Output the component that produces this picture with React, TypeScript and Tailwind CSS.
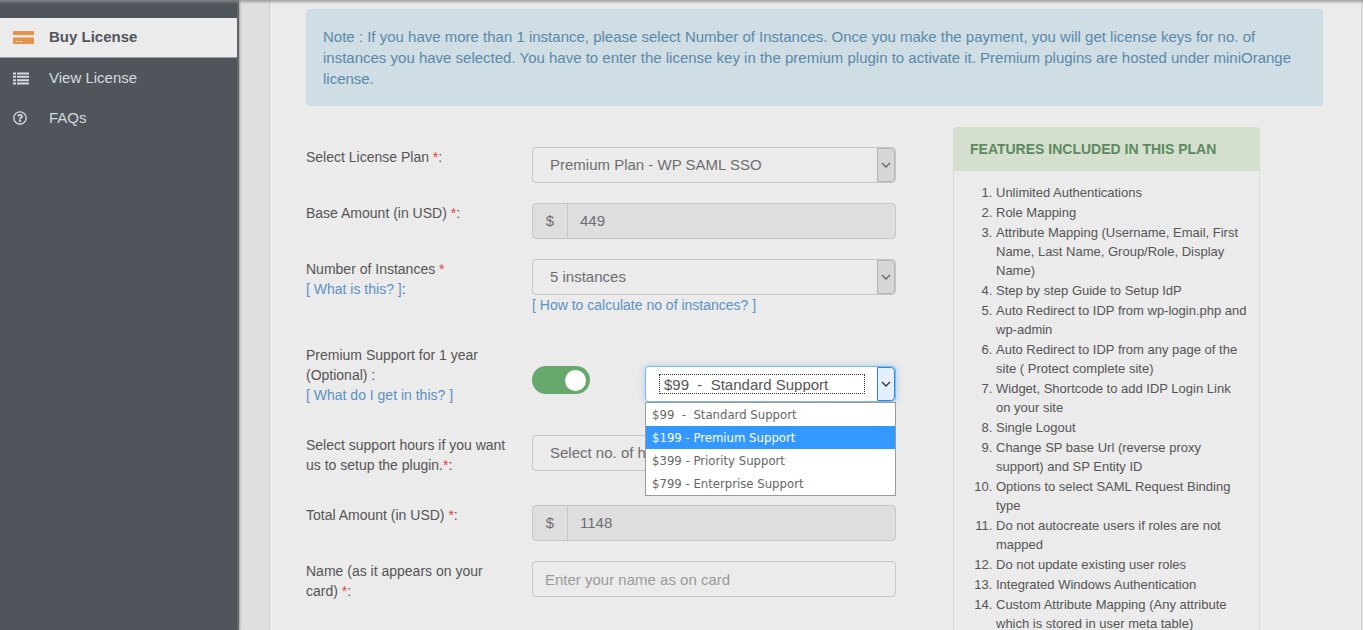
import React from "react";
import { FaRegQuestionCircle } from "react-icons/fa";

interface Option {
  label: string;
  highlighted?: boolean;
}

const FEATURES: string[] = [
  "Unlimited Authentications",
  "Role Mapping",
  "Attribute Mapping (Username, Email, First Name, Last Name, Group/Role, Display Name)",
  "Step by step Guide to Setup IdP",
  "Auto Redirect to IDP from wp-login.php and wp-admin",
  "Auto Redirect to IDP from any page of the site ( Protect complete site)",
  "Widget, Shortcode to add IDP Login Link on your site",
  "Single Logout",
  "Change SP base Url (reverse proxy support) and SP Entity ID",
  "Options to select SAML Request Binding type",
  "Do not autocreate users if roles are not mapped",
  "Do not update existing user roles",
  "Integrated Windows Authentication",
  "Custom Attribute Mapping (Any attribute which is stored in user meta table)",
];

const SUPPORT_OPTIONS: Option[] = [
  { label: "$99\u00a0 -\u00a0 Standard Support" },
  { label: "$199 - Premium Support", highlighted: true },
  { label: "$399 - Priority Support" },
  { label: "$799 - Enterprise Support" },
];

const CardIcon = () => (
  <svg width="21" height="13" viewBox="0 0 21 13" fill="#e69248" aria-hidden="true">
    <path d="M1 0h19a1 1 0 0 1 1 1v3H0V1a1 1 0 0 1 1-1z" />
    <path d="M0 6.5h21V12a1 1 0 0 1-1 1H1a1 1 0 0 1-1-1zM3 10v1h2v-1zM6 10v1h3v-1z" fillRule="evenodd" />
  </svg>
);

const ListIcon = () => (
  <svg width="16" height="13" viewBox="0 0 16 13" fill="currentColor" aria-hidden="true">
    <path d="M0 .5h3v2H0zM0 3.8h3v2H0zM0 7.2h3v2H0zM0 10.5h3v2H0z" />
    <path d="M4 .5h12v2H4zM4 3.8h12v2H4zM4 7.2h12v2H4zM4 10.5h12v2H4z" />
  </svg>
);

const Chevron = () => (
  <svg width="10" height="6" viewBox="0 0 10 6" fill="none" stroke="currentColor" strokeWidth="1.4" aria-hidden="true">
    <path d="M1 1l4 4 4-4" />
  </svg>
);

const Star = () => <span className="text-[#ee3b3b]">*</span>;

interface RowProps {
  label: React.ReactNode;
  htmlFor: string;
  help?: React.ReactNode;
  className: string;
  children: React.ReactNode;
}

const Row: React.FC<RowProps> = ({ label, htmlFor, help, className, children }) => (
  <div className={`flex ${className}`}>
    <div className="w-[226px] shrink-0 pr-5 text-sm leading-5">
      <label htmlFor={htmlFor} className="block">
        {label}
      </label>
      {help}
    </div>
    <div className="min-w-0 flex-1">{children}</div>
  </div>
);

const SelectBox: React.FC<{ id: string; value: string }> = ({ id, value }) => (
  <div className="flex h-9 rounded border border-[#c6c6c6]">
    <select
      id={id}
      className="min-w-0 flex-1 appearance-none bg-transparent pl-[17px] text-[15px] text-[#6e6e6e] outline-none">
      <option>{value}</option>
    </select>
    <span className="flex w-[18px] items-center justify-center rounded-r border border-[#b4b4b4] bg-[#d6d6d6] text-[#666]">
      <Chevron />
    </span>
  </div>
);

const AmountBox: React.FC<{ id: string; value: string }> = ({ id, value }) => (
  <div className="flex h-9 rounded border border-[#c6c6c6] bg-[#dedede] text-[15px] text-[#6e6e6e]">
    <span className="flex w-[35px] items-center justify-center border-r border-[#c6c6c6]">$</span>
    <input id={id} readOnly defaultValue={value} className="min-w-0 flex-1 bg-transparent px-3 outline-none" />
  </div>
);

const SupportSelect = () => (
  <div className="relative ml-auto w-[251px]">
    <div className="flex h-9 rounded border border-[#7db9e8] bg-white shadow-[0_0_6px_rgba(102,175,233,0.5)]">
      <select
        id="support"
        aria-label="Support plan"
        className="my-[7px] ml-[13px] mr-3 min-w-0 flex-1 appearance-none border border-dotted border-[#333] pl-1 text-[15px] leading-none text-[#555] outline-none">
        <option>{SUPPORT_OPTIONS[0].label}</option>
      </select>
      <span className="flex w-[18px] items-center justify-center rounded-r border border-[#2f8ade] bg-[#e3effb] text-[#333]">
        <Chevron />
      </span>
    </div>
    <ul
      role="listbox"
      aria-label="Support plans"
      className="absolute inset-x-0 top-full z-10 border border-[#9a9a9a] bg-white font-['DejaVu_Sans_Condensed','Noto_Sans',sans-serif] text-[13px] leading-[23px] text-[#666]">
      {SUPPORT_OPTIONS.map((option) => (
        <li
          key={option.label}
          role="option"
          aria-selected={!!option.highlighted}
          className={option.highlighted ? "bg-[#3399ff] px-1.5 text-white" : "px-1.5"}>
          {option.label}
        </li>
      ))}
    </ul>
  </div>
);

const Sidebar = () => (
  <aside className="z-10 w-[239px] shrink-0 border-r-2 border-[#63666a] bg-[#50555c] pt-[18px] shadow-[1px_0_2px_rgba(0,0,0,0.3)]">
    <nav className="text-[15px] text-[#d3dadd]">
      <a
        href="#buy"
        className="flex h-10 items-center border-b border-[#9a9da1] bg-[#ebebeb] pl-[13px] font-bold text-[#50555c]">
        <span className="w-9">
          <CardIcon />
        </span>
        Buy License
      </a>
      <a href="#view" className="flex h-10 items-center pl-[13px]">
        <span className="w-9">
          <ListIcon />
        </span>
        View License
      </a>
      <a href="#faqs" className="flex h-10 items-center pl-[13px]">
        <span className="w-9">
          <FaRegQuestionCircle size={14} />
        </span>
        FAQs
      </a>
    </nav>
  </aside>
);

const App: React.FC = () => {
  return (
    <div className="relative flex h-screen overflow-hidden bg-[#dfdfdf] font-['Liberation_Sans',Arial,sans-serif] text-[#555]">
      <div className="absolute inset-x-0 top-0 z-20 h-1 bg-linear-to-b from-[#8c8c8c]/80 to-transparent" />
      <Sidebar />
      <main className="ml-[30px] mr-px min-w-0 flex-1 border-x border-[#d2d2d2] bg-[#ebebeb] pl-9 pr-[38px] pt-[9px]">
        <div className="rounded border border-[#c3dde3] bg-[#cfdde5] px-4 py-4 text-[15px] leading-[21px] text-[#5b89a8]">
          Note : If you have more than 1 instance, please select Number of Instances. Once you make the payment, you
          will get license keys for no. of instances you have selected. You have to enter the license key in the
          premium plugin to activate it. Premium plugins are hosted under miniOrange license.
        </div>

        <div className="flex pr-[63px] pt-[21px]">
          <form className="min-w-0 flex-1 pt-5">
            <Row className="mb-5" htmlFor="plan" label={<>Select License Plan <Star />:</>}>
              <SelectBox id="plan" value="Premium Plan - WP SAML SSO" />
            </Row>
            <Row className="mb-5" htmlFor="base" label={<>Base Amount (in USD) <Star />:</>}>
              <AmountBox id="base" value="449" />
            </Row>
            <Row
              className="mb-[30px]"
              htmlFor="instances"
              label={<>Number of Instances <Star /></>}
              help={<><a href="#instances" className="text-[#5b92c4]">[ What is this? ]</a>:</>}>
              <SelectBox id="instances" value="5 instances" />
              <a href="#calculate" className="block text-sm leading-5 text-[#5b92c4]">
                [ How to calculate no of instances? ]
              </a>
            </Row>
            <Row
              className="mb-[30px]"
              htmlFor="premium"
              label="Premium Support for 1 year (Optional) :"
              help={<a href="#support" className="text-[#5b92c4]">[ What do I get in this? ]</a>}>
              <div className="flex pt-[21px]">
                <label className="flex h-7 w-[58px] items-center rounded-full bg-[#67a96d] has-[:checked]:justify-end has-[:checked]:pr-1">
                  <input
                    id="premium"
                    type="checkbox"
                    defaultChecked
                    aria-label="Premium support"
                    className="size-[21px] appearance-none rounded-full bg-white"
                  />
                </label>
                <SupportSelect />
              </div>
            </Row>
            <Row
              className="mb-[30px]"
              htmlFor="hours"
              label={<>Select support hours if you want us to setup the plugin.<Star />:</>}>
              <SelectBox id="hours" value="Select no. of hours" />
            </Row>
            <Row className="mb-5" htmlFor="total" label={<>Total Amount (in USD) <Star />:</>}>
              <AmountBox id="total" value="1148" />
            </Row>
            <Row className="mb-5" htmlFor="name" label={<>Name (as it appears on your card) <Star />:</>}>
              <input
                id="name"
                placeholder="Enter your name as on card"
                className="h-9 w-full rounded border border-[#c6c6c6] px-3 text-[15px] outline-none placeholder:text-[#9a9a9a]"
              />
            </Row>
          </form>

          <section className="ml-[57px] w-[307px] shrink-0 rounded border border-[#d3dfc9]">
            <h2 className="border-b border-[#cddfc4] bg-[#d4e0cd] px-4 py-[11px] text-sm font-bold leading-5 text-[#5b8a5e]">
              FEATURES INCLUDED IN THIS PLAN
            </h2>
            <ol className="flex list-decimal flex-col gap-px pb-10 pl-[42px] pr-3 pt-3 text-[13px] leading-[19px]">
              {FEATURES.map((feature) => (
                <li key={feature}>{feature}</li>
              ))}
            </ol>
          </section>
        </div>
      </main>
    </div>
  );
};

export default App;
